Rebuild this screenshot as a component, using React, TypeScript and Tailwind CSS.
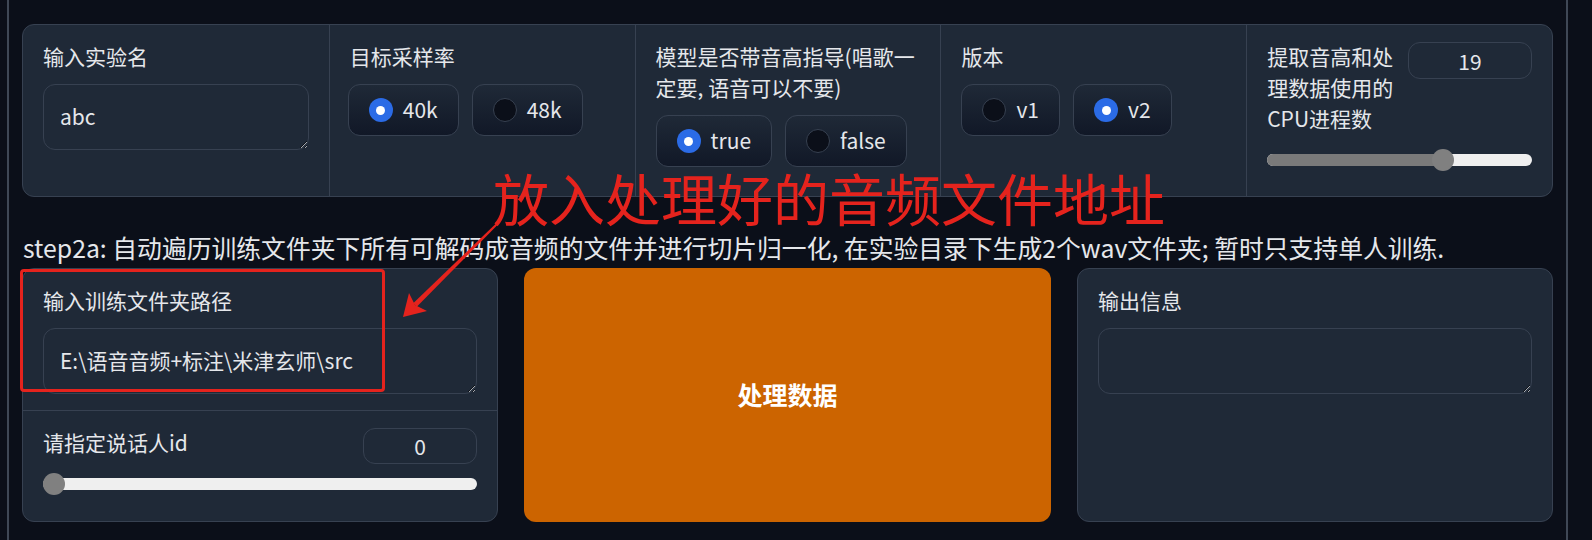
import React from 'react';

// 单选框
const Radio: React.FC<{ label: string; checked?: boolean }> = ({ label, checked }) => (
  <label className="flex h-[52px] items-center gap-[10px] rounded-xl border border-[#374151] bg-linear-to-t from-[#111827] to-[#1f2937] px-5">
    {checked ? (
      <span className="flex h-6 w-6 items-center justify-center rounded-full bg-[#2b6be6]">
        <span className="h-[9px] w-[9px] rounded-full bg-white" />
      </span>
    ) : (
      <span className="h-6 w-6 rounded-full border border-[#374151] bg-[#0b0f19]" />
    )}
    <span>{label}</span>
  </label>
);

// 滑块
const Slider: React.FC<{ value: number; min: number; max: number }> = ({ value, min, max }) => {
  const pct = (value - min) / (max - min);
  return (
    <div className="relative flex h-[22px] items-center">
      <div className="h-3 w-full overflow-hidden rounded-full bg-[#efefef]">
        <div className="h-full bg-[#7a7a7a]" style={{ width: `calc(${pct} * (100% - 22px) + 11px)` }} />
      </div>
      <div
        className="absolute top-0 h-[22px] w-[22px] rounded-full bg-[#808080]"
        style={{ left: `calc(${pct} * (100% - 22px))` }}
      />
    </div>
  );
};

const TextBox: React.FC<{ value?: string; className?: string }> = ({ value = '', className = '' }) => (
  <textarea
    readOnly
    value={value}
    rows={1}
    className={`block h-[66px] w-full resize-y rounded-xl border border-[#374151] bg-[#1f2937] px-4 py-4 leading-[31px] text-[#e5e7eb] outline-none [color-scheme:dark] ${className}`}
  />
);

const NumberBox: React.FC<{ value: number; className?: string }> = ({ value, className = '' }) => (
  <input
    readOnly
    value={value}
    className={`rounded-xl border border-[#374151] bg-[#1f2937] text-center text-[#e5e7eb] outline-none ${className}`}
  />
);

const App: React.FC = () => {
  return (
    <div className="relative h-[540px] w-[1592px] overflow-hidden bg-[#0b0f19] pl-[7px] font-['Noto_Sans_CJK_SC','Noto_Sans',sans-serif] text-[21px] text-[#e5e7eb]">
      <div className="h-full w-[1561px] border-x-2 border-[#3f4856] px-[13px] pt-6">
        {/* 顶部参数 */}
        <div className="grid h-[173px] grid-cols-5 rounded-xl border border-[#374151] bg-[#1f2937]">
          <div className="px-5 pt-4">
            <div className="leading-[31px]">输入实验名</div>
            <TextBox value="abc" className="mt-3" />
          </div>
          <div className="border-l border-[#374151] px-5 pt-4">
            <div className="leading-[31px]">目标采样率</div>
            <div className="mt-3 -ml-0.5 flex gap-[13px]">
              <Radio label="40k" checked />
              <Radio label="48k" />
            </div>
          </div>
          <div className="border-l border-[#374151] px-5 pt-4">
            <div className="leading-[31px]">模型是否带音高指导(唱歌一定要, 语音可以不要)</div>
            <div className="mt-3 flex gap-[13px]">
              <Radio label="true" checked />
              <Radio label="false" />
            </div>
          </div>
          <div className="border-l border-[#374151] px-5 pt-4">
            <div className="leading-[31px]">版本</div>
            <div className="mt-3 flex gap-[13px]">
              <Radio label="v1" />
              <Radio label="v2" checked />
            </div>
          </div>
          <div className="border-l border-[#374151] px-5 pt-4">
            <div className="flex items-start">
              <div className="w-[130px] leading-[31px]">提取音高和处理数据使用的CPU进程数</div>
              <NumberBox value={19} className="mt-px ml-auto h-[37px] w-[124px]" />
            </div>
            <div className="mt-[15px]">
              <Slider value={19} min={0} max={28} />
            </div>
          </div>
        </div>

        <p className="mt-[35px] pl-px text-[24.8px] leading-[31px]">
          step2a: 自动遍历训练文件夹下所有可解码成音频的文件并进行切片归一化, 在实验目录下生成2个wav文件夹; 暂时只支持单人训练.
        </p>

        {/* 处理数据 */}
        <div className="mt-[5px] grid h-[254px] grid-cols-[476px_527px_476px] gap-[26px]">
          <div className="flex flex-col rounded-xl border border-[#374151] bg-[#1f2937]">
            <div className="border-b border-[#374151] px-5 py-4">
              <div className="leading-[31px]">输入训练文件夹路径</div>
              <TextBox value="E:\语音音频+标注\米津玄师\src" className="mt-3" />
            </div>
            <div className="px-5 pt-4">
              <div className="flex items-start justify-between">
                <span className="leading-[31px]">请指定说话人id</span>
                <NumberBox value={0} className="mt-px h-[36px] w-[114px]" />
              </div>
              <div className="mt-[9px]">
                <Slider value={0} min={0} max={4} />
              </div>
            </div>
          </div>

          <button className="rounded-xl bg-[#cc6400] text-[25px] font-bold text-white">处理数据</button>

          <div className="rounded-xl border border-[#374151] bg-[#1f2937] px-5 pt-4">
            <div className="leading-[31px]">输出信息</div>
            <TextBox className="mt-3" />
          </div>
        </div>
      </div>

      {/* 标注 */}
      <div className="pointer-events-none absolute top-[269px] left-5 h-[123px] w-[365px] rounded-[4px] border-[3px] border-[#e5231d]" />
      <div className="pointer-events-none absolute top-[169px] left-[493px] text-[56px] leading-none whitespace-nowrap text-[#e5231d]">
        放入处理好的音频文件地址
      </div>
      <svg className="pointer-events-none absolute inset-0" width="1592" height="540" viewBox="0 0 1592 540">
        <polygon points="496.3,223.3 497.7,224.7 416.8,306.8 413.2,303.2" fill="#e5231d" />
        <polygon points="403,317 409,293 415,305 427,311" fill="#e5231d" />
      </svg>
    </div>
  );
};

export default App;
